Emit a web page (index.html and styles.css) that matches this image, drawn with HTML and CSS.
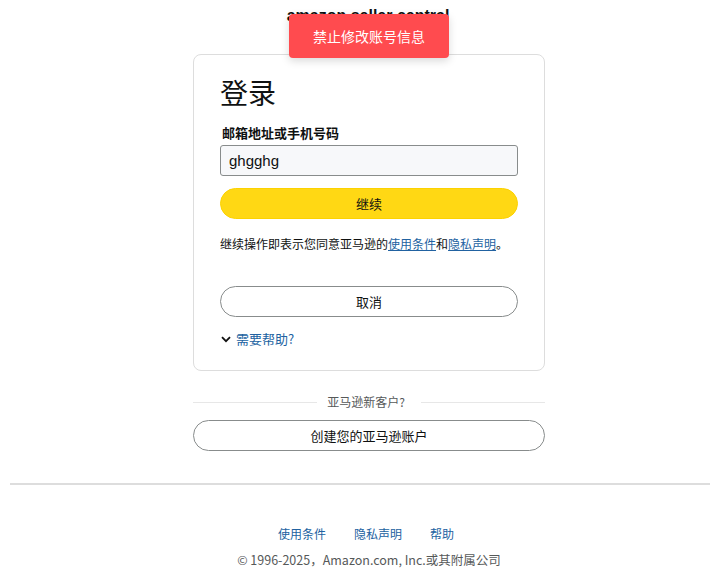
FILE: index.html
```html
<!DOCTYPE html>
<html lang="zh-CN">
<head>
<meta charset="utf-8">
<title>Amazon 登录</title>
<link rel="stylesheet" href="styles.css">
</head>
<body>
<div class="page">
  <div class="logo">amazon seller central</div>
  <div class="card">
    <h1 class="title">登录</h1>
    <label class="label">邮箱地址或手机号码</label>
    <div class="input">ghgghg</div>
    <button class="btn btn-primary">继续</button>
    <p class="terms">继续操作即表示您同意亚马逊的<a href="#">使用条件</a>和<a href="#">隐私声明</a>。</p>
    <button class="btn btn-secondary">取消</button>
    <div class="help">
      <svg class="chev" width="10" height="7" viewBox="0 0 10 7"><path d="M1 1.2 L5 5.2 L9 1.2" fill="none" stroke="#111" stroke-width="1.8"/></svg>
      <a href="#">需要帮助?</a>
    </div>
  </div>
  <div class="divider"><span>亚马逊新客户?</span></div>
  <button class="btn btn-secondary wide">创建您的亚马逊账户</button>
</div>
<hr class="rule">
<div class="footer">
  <div class="links"><a href="#">使用条件</a><a href="#">隐私声明</a><a href="#">帮助</a></div>
  <div class="copy">© 1996-2025，Amazon.com, Inc.或其附属公司</div>
</div>
<div class="toast">禁止修改账号信息</div>
</body>
</html>
```
FILE: styles.css
```css
* { box-sizing: border-box; }
body {
  margin: 0;
  font-family: Arial, "Liberation Sans", "Noto Sans CJK SC", sans-serif;
  color: #0f1111;
  background: #fff;
}
.page {
  width: 352px;
  margin: 0 auto;
  position: relative;
  left: 10px;
  padding-top: 6px;
}
.logo {
  text-align: center;
  font-weight: bold;
  font-size: 16px;
  line-height: 19px;
  height: 19px;
  margin-right: 2px;
}
.card {
  margin-top: 29px;
  border: 1px solid #dddddd;
  border-radius: 8px;
  padding: 20px 26px 22px;
  display: flex;
  flex-direction: column;
}
.title {
  margin: 0;
  font-size: 28px;
  line-height: 34px;
  font-weight: 400;
  font-family: "Noto Sans CJK SC", sans-serif;
}
.label {
  margin-top: 15px;
  font-size: 13px;
  font-weight: bold;
  line-height: 18px;
  padding-left: 2px;
  font-family: "Noto Sans CJK SC", sans-serif;
}
.input {
  margin-top: 3px;
  height: 31px;
  border: 1px solid #888c8c;
  border-radius: 3px;
  background: #f7f8fa;
  font-size: 15px;
  line-height: 29px;
  padding-left: 8px;
  color: #0f1111;
}
.btn {
  display: block;
  width: 100%;
  height: 31px;
  border-radius: 100px;
  font-family: "Noto Sans CJK SC", sans-serif;
  font-size: 13px;
  color: #0f1111;
  cursor: pointer;
  padding: 0;
}
.btn-primary {
  margin-top: 12px;
  background: #ffd814;
  border: 1px solid #fcd200;
}
.btn-secondary {
  background: #fff;
  border: 1px solid #888c8c;
}
.terms {
  margin: 16px 0 33px;
  font-size: 12px;
  line-height: 18px;
  font-family: "Noto Sans CJK SC", sans-serif;
  color: #0f1111;
}
.terms a { color: #2162a1; text-decoration: underline; }
.help {
  margin-top: 13px;
  display: flex;
  align-items: center;
  gap: 5px;
  font-size: 13px;
  line-height: 18px;
  font-family: "Noto Sans CJK SC", sans-serif;
  padding-left: 1px;
}
.help a { color: #2162a1; text-decoration: none; }
.divider {
  margin-top: 22px;
  display: flex;
  align-items: center;
  gap: 13px;
  font-size: 12px;
  line-height: 18px;
  color: #565959;
  font-family: "Noto Sans CJK SC", sans-serif;
}
.divider::before, .divider::after {
  content: "";
  flex: 1;
  height: 1px;
  background: #e7e7e7;
}
.divider span { position: relative; left: -3px; }
.wide { margin-top: 9px; }
.rule {
  margin: 32px 8px 0 10px;
  border: 0;
  height: 2px;
  background: #dddddd;
}
.footer {
  padding-top: 40px;
  padding-left: 14px;
  text-align: center;
  font-family: "Noto Sans CJK SC", sans-serif;
  font-size: 12px;
}
.links {
  display: flex;
  justify-content: center;
  gap: 28px;
  line-height: 18px;
}
.links a { color: #2162a1; text-decoration: none; }
.copy {
  margin-top: 8px;
  padding-left: 6px;
  color: #565959;
  line-height: 18px;
  font-size: 12.5px;
}
.toast {
  position: absolute;
  top: 14px;
  left: 289px;
  width: 160px;
  height: 44px;
  background: #ff4b4f;
  color: #fff;
  border-radius: 4px;
  box-shadow: 0 3px 8px rgba(0,0,0,0.15);
  font-family: "Noto Sans CJK SC", sans-serif;
  font-size: 14px;
  display: flex;
  align-items: center;
  justify-content: center;
}
```
